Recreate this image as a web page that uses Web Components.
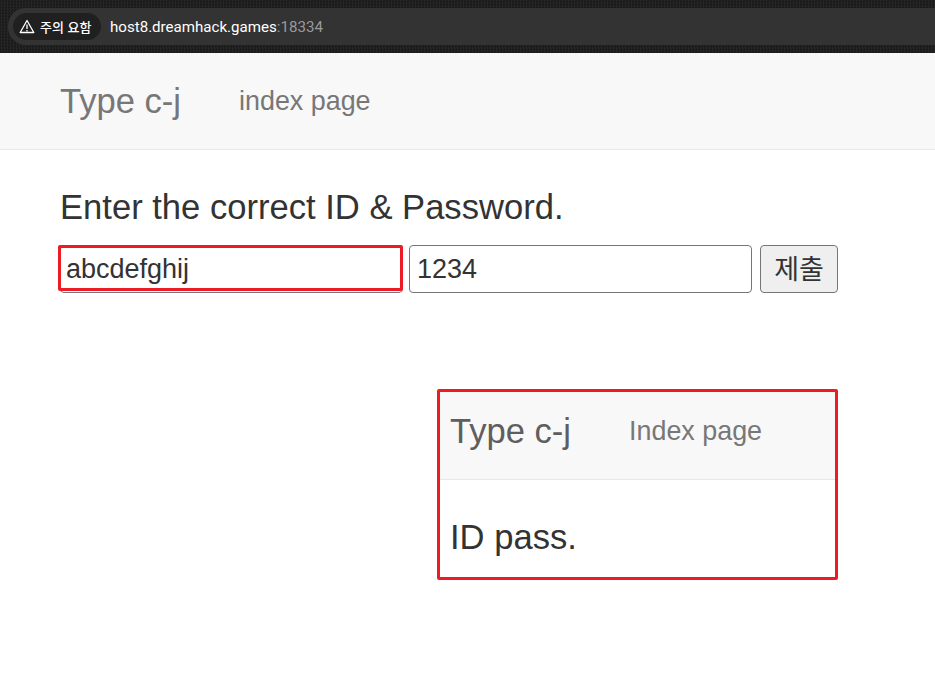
<!DOCTYPE html>
<html lang="ko">
<head>
<meta charset="utf-8">
<title>Type c-j</title>
<style>
  html, body { margin: 0; padding: 0; background: #fff; }
  body { font-family: "Liberation Sans", Arial, sans-serif; color: #333; }
</style>
</head>
<body>
<browser-bar host="host8.dreamhack.games" port=":18334"></browser-bar>
<site-nav brand="Type c-j" link="index page"></site-nav>
<login-form></login-form>
<result-panel><site-nav compact brand="Type c-j" link="Index page"></site-nav></result-panel>

<script>
const fontStack = '"Liberation Sans", Arial, sans-serif';

class BrowserBar extends HTMLElement {
  constructor() {
    super();
    this.attachShadow({ mode: 'open' });
    this.shadowRoot.innerHTML = `
      <style>
        :host {
          display: block;
          height: 53px;
          box-sizing: border-box;
          padding: 8px 0 8px 8px;
          background-color: #1d1d1d;
          background-image: repeating-conic-gradient(#252525 0 25%, #191919 0 50%);
          background-size: 3px 3px;
        }
        .omni {
          height: 37px;
          display: flex;
          align-items: center;
          gap: 9px;
          padding-left: 5px;
          background: #333;
          border-radius: 18px 0 0 18px;
        }
        .chip {
          height: 27px;
          width: 88px;
          box-sizing: border-box;
          display: flex;
          align-items: center;
          gap: 5px;
          padding-left: 6px;
          border-radius: 14px;
          background: #202020;
          color: #fff;
          font: 500 13px "Noto Sans CJK KR", sans-serif;
        }
        svg { display: block; flex: none; }
        .url { font: 15.1px "Roboto", ${fontStack}; color: #fff; }
        .url span { color: #9a9a9a; }
      </style>
      <div class="omni">
        <div class="chip">
          <svg width="16" height="15" viewBox="0 0 16 15" fill="none" stroke="#fff" stroke-width="1.3">
            <path d="M8 1.5 14.8 13.5H1.2Z" stroke-linejoin="round"/>
            <path d="M8 5.5V10M8 11V12.5"/>
          </svg>
          <span>주의 요함</span>
        </div>
        <div class="url">${this.getAttribute('host')}<span>${this.getAttribute('port')}</span></div>
      </div>`;
  }
}

class SiteNav extends HTMLElement {
  constructor() {
    super();
    this.attachShadow({ mode: 'open' });
    this.shadowRoot.innerHTML = `
      <style>
        :host {
          display: flex;
          align-items: center;
          box-sizing: border-box;
          height: 97px;
          padding-left: 60px;
          background: #f8f8f8;
          border-bottom: 1px solid #e7e7e7;
        }
        :host([compact]) { height: 88px; padding: 0 0 9px 10px; }
        .brand { font-size: 34.6px; color: #777; width: 179px; }
        :host([compact]) .brand { color: #5e5e5e; }
        .link { font-size: 26.9px; color: #777; }
      </style>
      <div class="brand">${this.getAttribute('brand')}</div>
      <div class="link">${this.getAttribute('link')}</div>`;
  }
}

class LoginForm extends HTMLElement {
  constructor() {
    super();
    this.attachShadow({ mode: 'open' });
    this.shadowRoot.innerHTML = `
      <style>
        :host { display: block; padding: 36px 0 0 60px; color: #333; }
        h3 { margin: 0 0 16px; font-size: 34.6px; line-height: 43px; font-weight: 400; }
        .row { display: flex; align-items: flex-start; }
        .field { position: relative; margin-right: 6px; }
        .box {
          width: 343px;
          height: 48px;
          box-sizing: border-box;
          padding-left: 7px;
          display: flex;
          align-items: center;
          border: 1px solid #767676;
          border-radius: 4px;
          background: #fff;
          font-size: 27px;
          color: #333;
        }
        .field.marked .box { padding-left: 5px; }
        .mark {
          position: absolute;
          left: -2px; top: 0; right: 0; bottom: 2px;
          border: 3px solid #ed1c24;
          border-radius: 2px;
        }
        button {
          width: 78px;
          height: 48px;
          margin-left: 2px;
          padding: 0 0 4px;
          border: 1px solid #767676;
          border-radius: 4px;
          background: #efefef;
          color: #333;
          font: 27px "Noto Sans CJK KR", sans-serif;
        }
      </style>
      <h3>Enter the correct ID &amp; Password.</h3>
      <div class="row">
        <div class="field marked"><div class="box">abcdefghij</div><div class="mark"></div></div>
        <div class="field"><div class="box">1234</div></div>
        <button type="button">제출</button>
      </div>`;
  }
}

class ResultPanel extends HTMLElement {
  constructor() {
    super();
    this.attachShadow({ mode: 'open' });
    this.shadowRoot.innerHTML = `
      <style>
        :host {
          display: block;
          box-sizing: border-box;
          width: 401px;
          height: 191px;
          margin: 96px 0 0 437px;
          border: 3px solid #ed1c24;
          border-radius: 2px;
        }
        p { margin: 0; padding: 38px 0 0 10px; font-size: 34.6px; line-height: 39px; color: #333; }
      </style>
      <slot></slot>
      <p>ID pass.</p>`;
  }
}

customElements.define('browser-bar', BrowserBar);
customElements.define('site-nav', SiteNav);
customElements.define('login-form', LoginForm);
customElements.define('result-panel', ResultPanel);
</script>
</body>
</html>
